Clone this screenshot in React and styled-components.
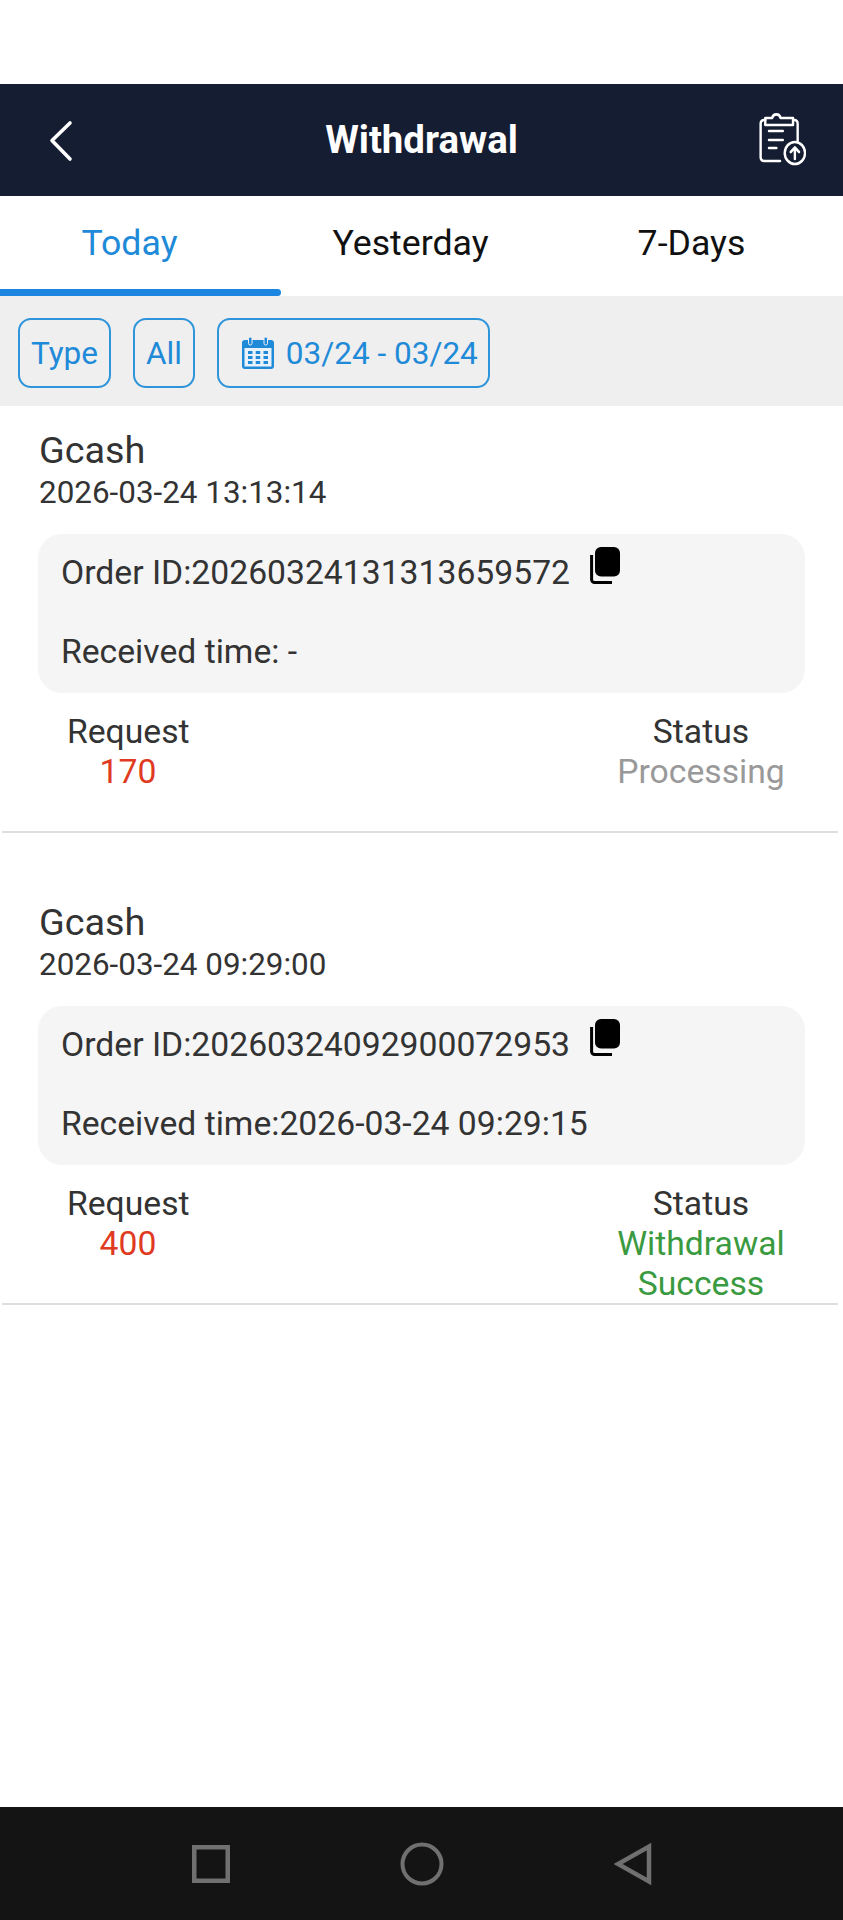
import React from "react";
import styled, { createGlobalStyle } from "styled-components";

const Global = createGlobalStyle`
  html, body { margin: 0; padding: 0; background: #fff; }
  body { font-family: Roboto, "Liberation Sans", sans-serif; }
  * { box-sizing: border-box; }
`;

const Page = styled.div`
  width: 843px;
  height: 1920px;
  display: flex;
  flex-direction: column;
  background: #fff;
  overflow: hidden;
`;
const Spacer = styled.div`
  height: 84px;
  flex: none;
`;
const Header = styled.header`
  height: 112px;
  flex: none;
  background: #141d31;
  display: grid;
  grid-template-columns: 120px 1fr 120px;
  align-items: center;
  color: #fff;
`;
const BackSlot = styled.div`
  display: flex;
  padding-left: 48px;
`;
const ActionSlot = styled.div`
  display: flex;
  justify-content: flex-end;
  padding-right: 37px;
`;
const Title = styled.h1`
  margin: 0;
  text-align: center;
  font-size: 38.4px;
  line-height: 44px;
  font-weight: 700;
`;
const Tabs = styled.nav`
  height: 100px;
  flex: none;
  display: grid;
  grid-template-columns: repeat(3, 1fr);
`;
const Tab = styled.div`
  position: relative;
  display: flex;
  justify-content: center;
  padding: 25px 22px 0 0;
  font-size: 35.7px;
  line-height: 44px;
  color: ${(p) => (p.$active ? "#1f8ad8" : "#111")};
  ${(p) =>
    p.$active &&
    `&::after {
      content: "";
      position: absolute;
      left: 0; right: 0; bottom: 0;
      height: 7px;
      background: #1c86e0;
      border-radius: 0 4px 4px 0;
    }`}
`;
const FilterBar = styled.div`
  height: 110px;
  flex: none;
  background: #efefef;
  display: flex;
  align-items: flex-start;
  gap: 22px;
  padding: 22px 18px 0;
`;
const FilterButton = styled.div`
  height: 70px;
  display: flex;
  align-items: center;
  gap: 12px;
  padding: 0 ${(p) => (p.$left ? 10 : 11)}px 0 ${(p) => p.$left || 11}px;
  border: 2px solid #2f95da;
  border-radius: 13px;
  color: #1f8ad8;
  font-size: 31.5px;
`;
const Card = styled.article`
  min-height: 427px;
  margin-bottom: 45px;
  padding-top: 22px;
  display: flex;
  flex-direction: column;
  border-bottom: 2px solid #dedede;
  margin-left: 2px;
  margin-right: 5px;
`;
const CardHead = styled.div`
  padding-left: 37px;
  color: #333;
`;
const Name = styled.div`
  font-size: 37.8px;
  line-height: 44px;
`;
const DateLine = styled.div`
  margin-top: 1px;
  font-size: 31.4px;
  line-height: 40px;
`;
const InfoBox = styled.div`
  margin: 21px 33px 0 36px;
  height: 159px;
  background: #f5f5f5;
  border-radius: 24px;
  padding: 19px 23px;
  display: flex;
  flex-direction: column;
  gap: 39px;
  color: #333;
  font-size: 33.7px;
  line-height: 40px;
`;
const InfoRow = styled.div`
  display: flex;
  align-items: flex-start;
`;
const CopyWrap = styled.span`
  display: flex;
  margin: -6px 0 0 20px;
`;
const Stats = styled.div`
  display: flex;
  justify-content: space-between;
  align-items: flex-start;
  padding: 19px 52px 0 65px;
  margin-bottom: -1px;
`;
const Stat = styled.div`
  width: ${(p) => p.$w}px;
  text-align: center;
  font-size: 33.7px;
  line-height: 40px;
  color: #333;
`;
const Value = styled.div`
  color: ${(p) => p.$color};
`;
const Fill = styled.div`
  flex: 1;
`;
const NavBar = styled.footer`
  height: 113px;
  flex: none;
  background: #141414;
  display: grid;
  grid-template-columns: repeat(3, 1fr);
  align-items: center;
  justify-items: center;
  padding: 0 105px;
`;

const BackIcon = () => (
  <svg width="26" height="44" viewBox="0 0 26 44" fill="none" stroke="#fff" strokeWidth="3.6" strokeLinecap="round" strokeLinejoin="round">
    <path d="M22 5 4 22.500 22 41" />
  </svg>
);

const ClipIcon = () => (
  <svg width="50" height="56" viewBox="0 0 54 56" preserveAspectRatio="none" fill="none" stroke="#fff" strokeWidth="2.6" strokeLinecap="round" strokeLinejoin="round">
    <path d="M40 8h1.5A3.5 3.5 0 0 1 45 11.5V30" />
    <path d="M26 49H8.5A3.5 3.5 0 0 1 5 45.500V11.500A3.500 3.500 0 0 1 8.500 8H10" />
    <path d="M10 5h7.500c.8-4.800 8.200-4.800 9 0H40v7H10z" transform="translate(0 1)" />
    <path d="M14 19h15M14 28h15M14 36h8" strokeWidth="2.6" />
    <circle cx="42" cy="41" r="11" />
    <path d="M42 47V35.500M37.500 40l4.500-4.500 4.500 4.500" />
  </svg>
);

const CalendarIcon = () => (
  <svg width="32" height="32" viewBox="0 0 32 32">
    <rect x="0" y="3" width="32" height="29" rx="3" fill="#1f8ad8" />
    <rect x="2.500" y="11" width="27" height="18.500" fill="#e9f2fa" />
    <rect x="6.500" y="0" width="3.500" height="8" rx="1.700" fill="#1f8ad8" stroke="#efefef" strokeWidth="1" />
    <rect x="22" y="0" width="3.500" height="8" rx="1.700" fill="#1f8ad8" stroke="#efefef" strokeWidth="1" />
    <path fill="#1f8ad8" d="M6 14h4.500v3H6zM13.700 14h4.500v3h-4.500zM21.500 14H26v3h-4.500zM6 19h4.500v3H6zM13.700 19h4.500v3h-4.500zM21.500 19H26v3h-4.500zM6 24h4.500v3H6zM13.700 24h4.500v3h-4.500zM21.500 24H26v3h-4.500z" />
  </svg>
);

const CopyIcon = () => (
  <svg width="30" height="37" viewBox="0 0 30 37">
    <rect x="5" y="0" width="25" height="29.500" rx="6" fill="#000" />
    <path d="M1.600 8v24.500a3 3 0 0 0 3 3H22" fill="none" stroke="#000" strokeWidth="3" />
  </svg>
);

const NavSquare = () => (
  <svg width="38" height="38" viewBox="0 0 38 38" fill="none" stroke="#707070" strokeWidth="4.500"><rect x="2.250" y="2.250" width="33.500" height="33.500" /></svg>
);
const NavCircle = () => (
  <svg width="44" height="44" viewBox="0 0 44 44" fill="none" stroke="#707070" strokeWidth="4"><circle cx="22" cy="22" r="19.500" /></svg>
);
const NavBack = () => (
  <svg width="38" height="44" viewBox="0 0 38 44" fill="none" stroke="#707070" strokeWidth="4.500" strokeLinejoin="miter"><path d="M35 4.500V39.500L4 22z" /></svg>
);

const orders = [
  { date: "2026-03-24 13:13:14", id: "20260324131313659572", received: " -", amount: "170", status: "Processing", color: "#999" },
  { date: "2026-03-24 09:29:00", id: "20260324092900072953", received: "2026-03-24 09:29:15", amount: "400", status: "Withdrawal Success", color: "#3a9a3f" },
];

export default function App() {
  return (
    <Page>
      <Global />
      <Spacer />
      <Header>
        <BackSlot><BackIcon /></BackSlot>
        <Title>Withdrawal</Title>
        <ActionSlot><ClipIcon /></ActionSlot>
      </Header>
      <Tabs>
        <Tab $active>Today</Tab>
        <Tab>Yesterday</Tab>
        <Tab>7-Days</Tab>
      </Tabs>
      <FilterBar>
        <FilterButton>Type</FilterButton>
        <FilterButton>All</FilterButton>
        <FilterButton $left={23}><CalendarIcon />03/24 - 03/24</FilterButton>
      </FilterBar>
      {orders.map((o) => (
        <Card key={o.id}>
          <CardHead>
            <Name>Gcash</Name>
            <DateLine>{o.date}</DateLine>
          </CardHead>
          <InfoBox>
            <InfoRow>
              Order ID:{o.id}
              <CopyWrap><CopyIcon /></CopyWrap>
            </InfoRow>
            <InfoRow>Received time:{o.received}</InfoRow>
          </InfoBox>
          <Stats>
            <Stat $w={122}>Request<Value $color="#e03a22">{o.amount}</Value></Stat>
            <Stat $w={170}>Status<Value $color={o.color}>{o.status}</Value></Stat>
          </Stats>
        </Card>
      ))}
      <Fill />
      <NavBar>
        <NavSquare />
        <NavCircle />
        <NavBack />
      </NavBar>
    </Page>
  );
}
